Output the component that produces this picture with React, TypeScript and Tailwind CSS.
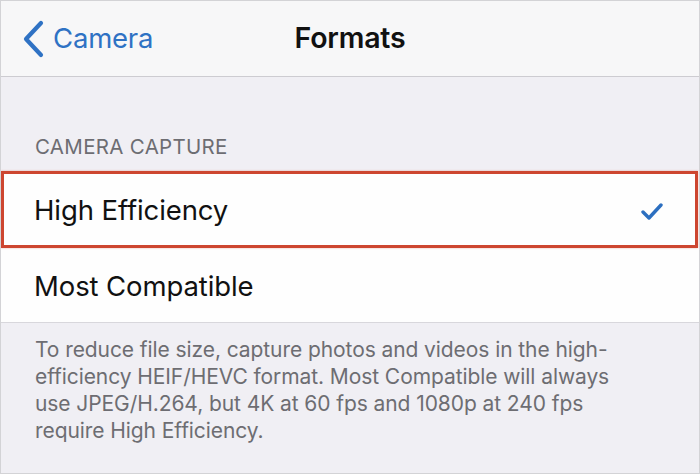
import React from "react";

export default function App() {
  return (
    <div
      className="w-[700px] h-[474px] overflow-hidden border border-[#d3d3d6] bg-[#f0eff4] flex flex-col"
      style={{ fontFamily: "Inter, 'Liberation Sans', sans-serif" }}
    >
      {/* Nav bar */}
      <div className="relative h-[76px] shrink-0 bg-[#f7f7f8] border-b border-[#cdccd1] flex items-center">
        <div className="flex items-center pl-[21px] gap-[8px] text-[#2f72c4]">
          <svg width="23" height="38" viewBox="0 0 23 38" className="shrink-0">
            <path d="M19 3 L4 19 L19 35" fill="none" stroke="#2f72c4" strokeWidth="4.2" strokeLinecap="round" strokeLinejoin="round" />
          </svg>
          <span className="text-[27.5px] leading-none tracking-[-0.2px]">Camera</span>
        </div>
        <div className="absolute inset-0 flex items-center justify-center pointer-events-none">
          <span className="text-[28.5px] leading-none font-semibold text-[#111] tracking-[-0.2px]">Formats</span>
        </div>
      </div>

      {/* Section header */}
      <div className="h-[94px] shrink-0 flex items-end pl-[34px] pb-[14px]">
        <span className="text-[20.5px] leading-none text-[#6d6d72] tracking-[0.3px]">CAMERA CAPTURE</span>
      </div>

      {/* Rows */}
      <div className="bg-[#fefefe] shrink-0">
        <div className="h-[77px] border-[3px] border-[#cd4630] mr-[1px] flex items-center justify-between pl-[30px] pr-[31px] pt-[2px] shadow-[0_0_2px_rgba(205,70,48,0.4)]">
          <span className="text-[27.5px] leading-none text-[#111] tracking-[-0.1px]">High Efficiency</span>
          <svg width="24" height="18" viewBox="0 0 24 18">
            <path d="M3 10 L9 16 L21 3" fill="none" stroke="#2c6fc0" strokeWidth="3.4" strokeLinecap="round" strokeLinejoin="round" />
          </svg>
        </div>
        <div className="h-[75px] border-b border-[#d8d7dc] flex items-center pl-[33px] pt-[3px]">
          <span className="text-[27.5px] leading-none text-[#111] tracking-[-0.1px]">Most Compatible</span>
        </div>
      </div>

      {/* Footer */}
      <div className="pl-[34px] pr-[10px] pt-[13px]">
        <p className="text-[21px] leading-[27px] text-[#6d6d72] tracking-[-0.08px] w-[660px]">
          To reduce file size, capture photos and videos in the high-
          <br />
          efficiency HEIF/HEVC format. Most Compatible will always
          <br />
          use JPEG/H.264, but 4K at 60 fps and 1080p at 240 fps
          <br />
          require High Efficiency.
        </p>
      </div>
    </div>
  );
}
